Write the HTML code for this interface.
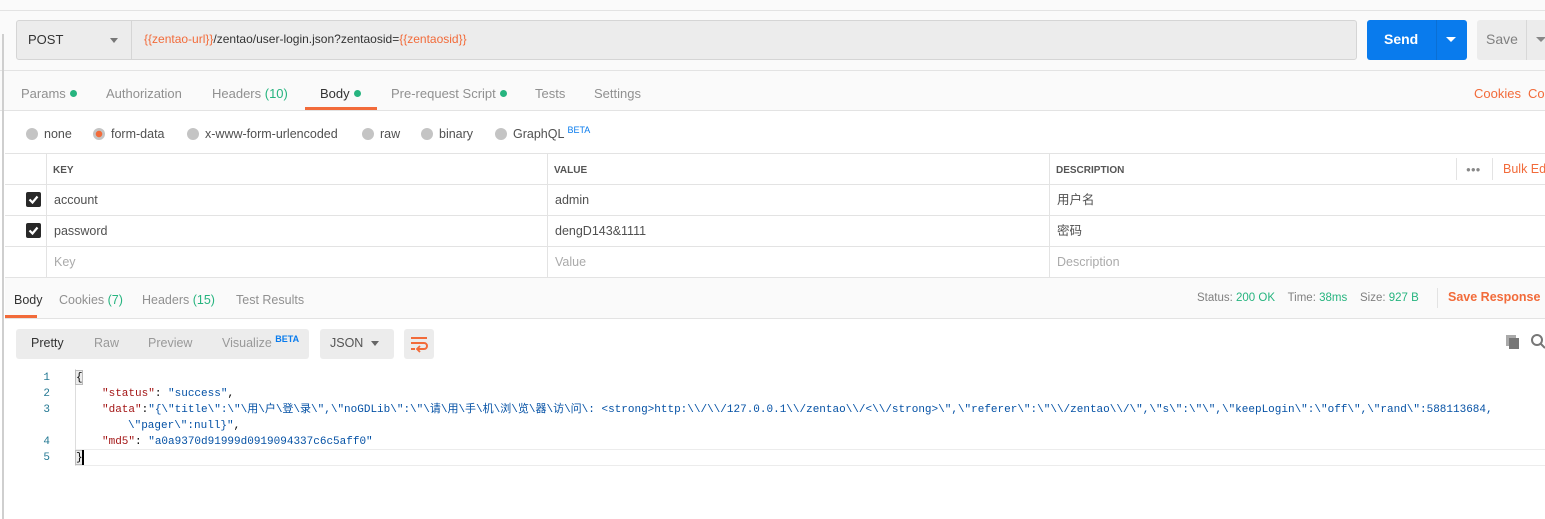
<!DOCTYPE html>
<html><head><meta charset="utf-8"><style>
*{box-sizing:border-box;margin:0;padding:0}
body{width:1545px;height:519px;overflow:hidden;background:#fff;font-family:"Liberation Sans","Noto Sans CJK SC",sans-serif;font-size:12px;color:#505050;position:relative}
.a{position:absolute;white-space:nowrap;line-height:15px}
.o{color:#f26b3a}.g{color:#26b47f}
.dot{display:inline-block;width:7px;height:7px;border-radius:50%;background:#26b47f;margin-left:4px;vertical-align:1px}
.rad{display:inline-block;width:12px;height:12px;border-radius:50%;background:#c4c4c4;vertical-align:-2px;margin-right:6px}
.hl{position:absolute;height:1px;background:#e3e3e3}
.vl{position:absolute;width:1px;background:#e3e3e3}
.cb{position:absolute;width:15px;height:15px;background:#282828;border-radius:2px}
.code{font-family:"Liberation Mono","Noto Sans CJK SC",monospace;font-size:11px;color:#1a1aa6;line-height:16px;height:16px}
.k{color:#a31515}.s{color:#0451a5}
.ln{position:absolute;left:30px;width:20px;text-align:right;font-family:"Liberation Mono",monospace;font-size:11px;color:#237893;line-height:16px}
</style></head><body>
<div class="a" style="left:0;top:0;width:1545px;height:111px;background:#fafafa"></div>
<div class="hl" style="left:0;top:10px;width:1545px"></div>
<div class="hl" style="left:0;top:70px;width:1545px"></div>
<div class="hl" style="left:0;top:110px;width:1545px"></div>
<!-- URL bar -->
<div class="a" style="left:16px;top:20px;width:1341px;height:40px;background:#ececec;border:1px solid #d5d5d5;border-radius:3px"></div>
<div class="vl" style="left:131px;top:21px;height:38px;background:#d5d5d5"></div>
<div class="a" style="left:28px;top:32px;font-size:13px;color:#333">POST</div>
<div class="a" style="left:110px;top:38px;border:4px solid transparent;border-top:5px solid #777"></div>
<div class="a" style="left:144px;top:32px;font-size:12px;color:#333"><span class="o">{{zentao-url}}</span>/zentao/user-login.json?zentaosid=<span class="o">{{zentaosid}}</span></div>
<div class="a" style="left:1367px;top:20px;width:100px;height:40px;background:#097bed;border-radius:3px"></div>
<div class="vl" style="left:1436px;top:20px;height:40px;background:#0a6fd4"></div>
<div class="a" style="left:1384px;top:32px;font-size:14px;font-weight:bold;color:#fff">Send</div>
<div class="a" style="left:1446px;top:37px;border:5px solid transparent;border-top:5px solid #fff"></div>
<div class="a" style="left:1477px;top:20px;width:80px;height:40px;background:#ececec;border-radius:3px"></div>
<div class="vl" style="left:1526px;top:20px;height:40px;background:#d8d8d8"></div>
<div class="a" style="left:1486px;top:32px;font-size:14px;color:#808080">Save</div>
<div class="a" style="left:1536px;top:37px;border:5px solid transparent;border-top:5px solid #888"></div>
<!-- tabs -->
<div class="a" style="left:21px;top:86px;font-size:13px;color:#909090">Params<span class="dot"></span></div>
<div class="a" style="left:106px;top:86px;font-size:13px;color:#909090">Authorization</div>
<div class="a" style="left:212px;top:86px;font-size:13px;color:#909090">Headers <span class="g">(10)</span></div>
<div class="a" style="left:320px;top:86px;font-size:13px;color:#333">Body<span class="dot"></span></div>
<div class="a" style="left:305px;top:107px;width:72px;height:3px;background:#f26b3a"></div>
<div class="a" style="left:391px;top:86px;font-size:13px;color:#909090">Pre-request Script<span class="dot"></span></div>
<div class="a" style="left:535px;top:86px;font-size:13px;color:#909090">Tests</div>
<div class="a" style="left:594px;top:86px;font-size:13px;color:#909090">Settings</div>
<div class="a o" style="left:1474px;top:86px;font-size:13px">Cookies</div>
<div class="a o" style="left:1528px;top:86px;font-size:13px">Code</div>
<!-- radios -->
<div class="a" style="left:26px;top:127px;font-size:12.5px;color:#505050"><span class="rad"></span>none</div>
<div class="a" style="left:93px;top:127px;font-size:12.5px;color:#505050"><span class="rad" style="background:radial-gradient(circle,#f26b3a 3px,#c4c4c4 3.5px)"></span>form-data</div>
<div class="a" style="left:187px;top:127px;font-size:12.5px;color:#505050"><span class="rad"></span>x-www-form-urlencoded</div>
<div class="a" style="left:362px;top:127px;font-size:12.5px;color:#505050"><span class="rad"></span>raw</div>
<div class="a" style="left:421px;top:127px;font-size:12.5px;color:#505050"><span class="rad"></span>binary</div>
<div class="a" style="left:495px;top:127px;font-size:12.5px;color:#505050"><span class="rad"></span>GraphQL <sup style="color:#097bed;font-size:9px;line-height:0">BETA</sup></div>
<!-- table -->
<div class="hl" style="left:5px;top:153px;width:1540px"></div>
<div class="hl" style="left:5px;top:184px;width:1540px"></div>
<div class="hl" style="left:5px;top:215px;width:1540px"></div>
<div class="hl" style="left:5px;top:246px;width:1540px"></div>
<div class="hl" style="left:5px;top:277px;width:1540px"></div>
<div class="vl" style="left:46px;top:153px;height:124px"></div>
<div class="vl" style="left:547px;top:153px;height:124px"></div>
<div class="vl" style="left:1049px;top:153px;height:124px"></div>
<div class="vl" style="left:1456px;top:158px;height:22px"></div>
<div class="vl" style="left:1492px;top:158px;height:22px"></div>
<div class="a" style="left:53px;top:163px;font-size:10px;font-weight:bold;color:#555">KEY</div>
<div class="a" style="left:554px;top:163px;font-size:10px;font-weight:bold;color:#555">VALUE</div>
<div class="a" style="left:1056px;top:163px;font-size:10px;font-weight:bold;color:#555">DESCRIPTION</div>
<div class="a" style="left:1466px;top:162px;font-size:8px;color:#888;letter-spacing:0px">●●●</div>
<div class="a o" style="left:1503px;top:162px;font-size:12.5px">Bulk Edit</div>
<div class="cb" style="left:26px;top:192px"></div>
<svg class="a" style="left:26px;top:192px" width="15" height="15"><path d="M3.5 7.5l3 3 5-6" fill="none" stroke="#fff" stroke-width="2.2"/></svg>
<div class="cb" style="left:26px;top:223px"></div>
<svg class="a" style="left:26px;top:223px" width="15" height="15"><path d="M3.5 7.5l3 3 5-6" fill="none" stroke="#fff" stroke-width="2.2"/></svg>
<div class="a" style="left:54px;top:193px;font-size:12.5px">account</div>
<div class="a" style="left:555px;top:193px;font-size:12.5px">admin</div>
<div class="a" style="left:1057px;top:193px;font-size:12.5px">用户名</div>
<div class="a" style="left:54px;top:224px;font-size:12.5px">password</div>
<div class="a" style="left:555px;top:224px;font-size:12.5px">dengD143&amp;1111</div>
<div class="a" style="left:1057px;top:224px;font-size:12.5px">密码</div>
<div class="a" style="left:54px;top:255px;font-size:12.5px;color:#aaa">Key</div>
<div class="a" style="left:555px;top:255px;font-size:12.5px;color:#aaa">Value</div>
<div class="a" style="left:1057px;top:255px;font-size:12.5px;color:#aaa">Description</div>
<!-- response header -->
<div class="a" style="left:5px;top:278px;width:1540px;height:40px;background:#fafafa"></div>
<div class="hl" style="left:5px;top:318px;width:1540px"></div>
<div class="a" style="left:14px;top:293px;font-size:12.5px;color:#333">Body</div>
<div class="a" style="left:5px;top:315px;width:32px;height:3px;background:#f26b3a"></div>
<div class="a" style="left:59px;top:293px;font-size:12.5px;color:#909090">Cookies <span class="g">(7)</span></div>
<div class="a" style="left:142px;top:293px;font-size:12.5px;color:#909090">Headers <span class="g">(15)</span></div>
<div class="a" style="left:236px;top:293px;font-size:12.5px;color:#909090">Test Results</div>
<div class="a" style="left:1197px;top:291px;font-size:11.5px;color:#808080">Status: <span class="g">200 OK</span>&nbsp;&nbsp;&nbsp; Time: <span class="g">38ms</span>&nbsp;&nbsp;&nbsp; Size: <span class="g">927 B</span></div>
<div class="vl" style="left:1437px;top:288px;height:20px"></div>
<div class="a o" style="left:1448px;top:290px;font-size:12.5px;font-weight:bold">Save Response</div>
<!-- toolbar -->
<div class="a" style="left:16px;top:329px;width:293px;height:30px;background:#ececec;border-radius:3px"></div>
<div class="a" style="left:31px;top:336px;font-size:12.5px;color:#333">Pretty</div>
<div class="a" style="left:94px;top:336px;font-size:12.5px;color:#999">Raw</div>
<div class="a" style="left:148px;top:336px;font-size:12.5px;color:#999">Preview</div>
<div class="a" style="left:222px;top:336px;font-size:12.5px;color:#999">Visualize <sup style="color:#097bed;font-size:9px;font-weight:bold;line-height:0">BETA</sup></div>
<div class="a" style="left:320px;top:329px;width:74px;height:30px;background:#ececec;border-radius:3px"></div>
<div class="a" style="left:330px;top:336px;font-size:12.5px;color:#555">JSON</div>
<div class="a" style="left:371px;top:341px;border:4px solid transparent;border-top:5px solid #666"></div>
<div class="a" style="left:404px;top:329px;width:30px;height:30px;background:#ececec;border-radius:3px"></div>
<svg class="a" style="left:409px;top:334px" width="20" height="20" viewBox="0 0 20 20"><path d="M2 4h16M2 9h13a3 3 0 0 1 0 6H9M2 15h4" fill="none" stroke="#f26b3a" stroke-width="2"/><path d="M11 12l-3 3 3 3" fill="none" stroke="#f26b3a" stroke-width="1.8"/></svg>
<svg class="a" style="left:1505px;top:334px" width="16" height="16"><rect x="1" y="1" width="10" height="11" fill="#aaa"/><rect x="4" y="4" width="10" height="11" fill="#777"/></svg>
<svg class="a" style="left:1530px;top:333px" width="15" height="17"><circle cx="7" cy="7" r="5" fill="none" stroke="#777" stroke-width="2"/><path d="M11 11l4 4" stroke="#777" stroke-width="2"/></svg>
<!-- code -->
<div class="vl" style="left:75px;top:369px;height:97px;background:#ddd"></div>
<div class="hl" style="left:76px;top:449px;width:1469px;background:#ececec"></div>
<div class="hl" style="left:76px;top:465px;width:1469px;background:#ececec"></div>
<div class="a" style="left:75px;top:370px;width:8px;height:15px;background:#ececec;border:1px solid #bbb"></div>
<div class="a" style="left:75px;top:450px;width:8px;height:15px;background:#ececec;border:1px solid #bbb"></div>
<div class="a" style="left:82px;top:450px;width:2px;height:15px;background:#000"></div>
<div class="ln" style="top:370px">1</div>
<div class="ln" style="top:386px">2</div>
<div class="ln" style="top:402px">3</div>
<div class="ln" style="top:434px">4</div>
<div class="ln" style="top:450px">5</div>
<div class="a code" style="left:76px;top:370px;color:#000">{</div>
<div class="a code" style="left:102px;top:386px"><span class="k">"status"</span><span style="color:#000">: </span><span class="s">"success"</span><span style="color:#000">,</span></div>
<div class="a code" style="left:102px;top:402px"><span class="k">"data"</span><span style="color:#000">:</span><span class="s">"{\"title\":\"\用\户\登\录\",\"noGDLib\":\"\请\用\手\机\浏\览\器\访\问\: &lt;strong&gt;http:\\/\\/127.0.0.1\\/zentao\\/&lt;\\/strong&gt;\",\"referer\":\"\\/zentao\\/\",\"s\":\"\",\"keepLogin\":\"off\",\"rand\":588113684,</span></div>
<div class="a code" style="left:128px;top:418px"><span class="s">\"pager\":null}"</span><span style="color:#000">,</span></div>
<div class="a code" style="left:102px;top:434px"><span class="k">"md5"</span><span style="color:#000">: </span><span class="s">"a0a9370d91999d0919094337c6c5aff0"</span></div>
<div class="a code" style="left:76px;top:450px;color:#000">}</div>
<div class="a" style="left:2px;top:34px;width:2px;height:485px;background:#cfcfcf"></div>
</body></html>
